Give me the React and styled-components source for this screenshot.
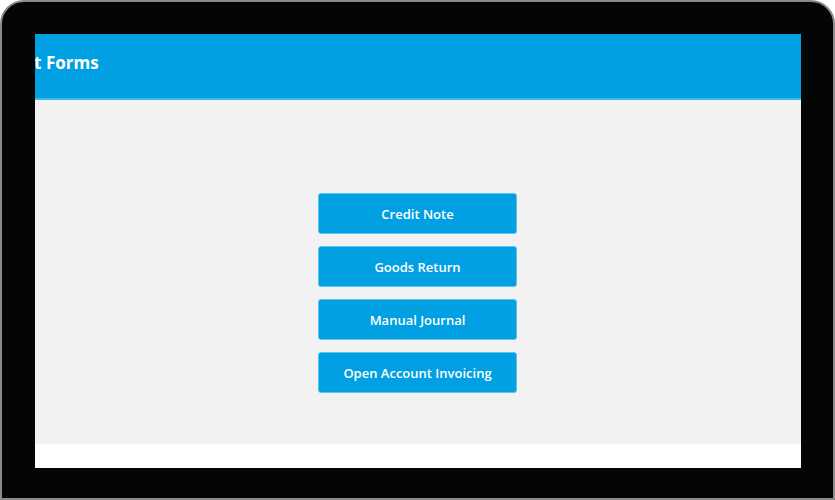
import styled, { createGlobalStyle } from "styled-components"

const GlobalStyle = createGlobalStyle`
    html, body {
        margin: 0;
        padding: 0;
        background: #ffffff;
    }
    body {
        font-family: "Open Sans", "Liberation Sans", sans-serif;
    }
`

const forms = ["Credit Note", "Goods Return", "Manual Journal", "Open Account Invoicing"]

const App = () => {
    return (
        <>
            <GlobalStyle />
            <Device>
                <Screen>
                    <Header>
                        <Title>Account Forms</Title>
                    </Header>
                    <Content>
                        {forms.map((name) => (
                            <FormButton key={name}>{name}</FormButton>
                        ))}
                    </Content>
                    <Footer />
                </Screen>
            </Device>
        </>
    )
}

const Device = styled.div`
    box-sizing: border-box;
    width: 835px;
    height: 500px;
    background: #050505;
    border: 2px solid #8a8a8a;
    border-radius: 24px 24px 0 0;
    padding: 32px 32px 30px 33px;
    display: flex;
`
const Screen = styled.div`
    flex: 1;
    display: flex;
    flex-direction: column;
    overflow: hidden;
    background: #ffffff;
`
const Header = styled.div`
    height: 64px;
    flex-shrink: 0;
    background: #00a0e3;
    border-bottom: 2px solid #45b6ea;
    display: flex;
    align-items: center;
    overflow: hidden;
`
const Title = styled.div`
    margin-left: -63px;
    margin-top: -8px;
    color: #ffffff;
    font-size: 17px;
    font-weight: 700;
    white-space: nowrap;
`
const Content = styled.div`
    height: 344px;
    flex-shrink: 0;
    background: #f2f2f2;
    display: flex;
    flex-direction: column;
    align-items: center;
    gap: 12px;
    padding-top: 93px;
    box-sizing: border-box;
`
const FormButton = styled.button`
    width: 199px;
    height: 41px;
    margin-left: -1px;
    background: #00a0e3;
    border: 1px solid #5cc2ee;
    border-radius: 3px;
    color: #ffffff;
    font-family: "Open Sans", "Liberation Sans", sans-serif;
    font-size: 13px;
    font-weight: 600;
    cursor: pointer;
`
const Footer = styled.div`
    flex: 1;
    background: #ffffff;
`

export default App
